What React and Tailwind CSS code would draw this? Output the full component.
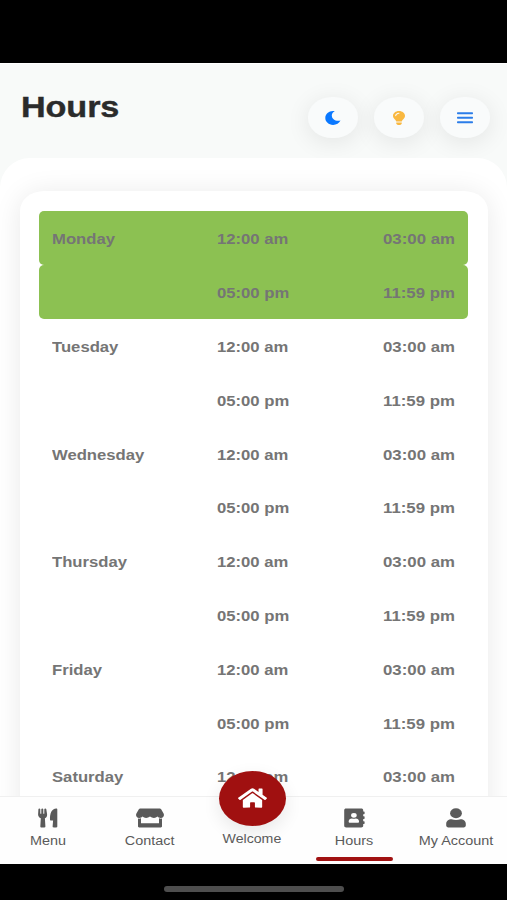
import React from "react";
import { FaLightbulb, FaHome } from "react-icons/fa";

const days = ["Monday", "Tuesday", "Wednesday", "Thursday", "Friday", "Saturday"];

function MoonIcon() {
  return (
    <svg viewBox="0 0 16 14" className="h-[14px] w-[16px] fill-[#0a78ff]">
      <path d="M9.8.2C7.9 1 6.8 2.600 6.800 4.500c0 3.100 2.900 5.300 6.200 5.300.9 0 1.700-.1 2.500-.3-1.300 2.700-4.100 4.400-7.400 4.400C3.700 13.900.3 10.900.3 7.100.3 3.200 3.800.1 8 .1c.6 0 1.200 0 1.800.1Z" />
    </svg>
  );
}

function BarsIcon() {
  return (
    <svg viewBox="0 0 16 12" className="h-[12px] w-[16px] fill-[#2b7de9]">
      <rect y="0.3" width="16" height="2" rx="0.7" />
      <rect y="4.800" width="16" height="2" rx="0.7" />
      <rect y="9.300" width="16" height="2" rx="0.7" />
    </svg>
  );
}

function UtensilsIcon() {
  return (
    <svg viewBox="0 0 20 20" className="h-[20px] w-[20px] fill-current">
      <path d="M.4 1.200C.5.300 2.200.300 2.300 1.200V5.800h1V1.200C3.400.300 5.200.300 5.300 1.200V5.800h1V1.200C6.400.300 8.200.300 8.300 1.200L9.100 6.200c.2 2.200-.8 3.500-2.200 4.100l.5 8.300c0 .5-.4.9-.9.9H3.200c-.5 0-.9-.4-.9-.9l.5-8.300C1.200 9.700.1 8.300.1 6.500Z" />
      <path d="M18.300.5c.6 0 1 .4 1 .9v17.200c0 .5-.4.9-1 .9h-2.700c-.6 0-1-.4-1-.9l.5-6.100h-2.400c-.4 0-.7-.3-.7-.7C11.600 5.500 13.700.7 18.300.5Z" />
    </svg>
  );
}

function StoreIcon() {
  return (
    <svg viewBox="0 0 28 20" className="h-[20px] w-[28px] fill-current">
      <path d="M4.200.4h19.600c.5 0 .9.2 1.200.6l2.600 4.500c1 1.900-.2 4.100-2.700 4.400-1.500.1-2.700-.4-3.500-1.400-1.600 1.900-5.100 1.900-7.400 0-2.300 1.900-5.800 1.900-7.400 0-.8 1-2 1.500-3.500 1.400C.6 9.600-.6 7.400.4 5.500L3 1c.3-.4.7-.6 1.200-.6Z" />
      <path d="M2 10.600c1 .2 2 .1 3-.3v4.900h18v-4.900c1 .4 2 .5 3 .3v7.700c0 .7-.5 1.200-1.200 1.200H3.200c-.7 0-1.200-.5-1.200-1.200Z" />
    </svg>
  );
}

function AddressBookIcon() {
  return (
    <svg viewBox="0 0 21 20" className="h-[20px] w-[21px] fill-current">
      <path
        fillRule="evenodd"
        d="M2.200.5h15c1.200 0 2 .7 2 1.700V3.500h.8c.3 0 .6.2.6.500v1.700c0 .3-.3.5-.6.500h-.8V8.300h.8c.3 0 .6.200.6.500v1.800c0 .3-.3.500-.6.500h-.8v2.200h.8c.3 0 .6.200.6.500v1.700c0 .3-.3.500-.6.500h-.8v1.700c0 1-.8 1.700-2 1.700h-15c-1.200 0-2-.7-2-1.700V2.200C.2 1.200 1 .5 2.200.5ZM9.900 4.900a2.800 2.400 0 1 0 0 4.900 2.800 2.400 0 1 0 0-4.900ZM8 10.500c-2 0-3.300 1.200-3.300 2.800v.7c0 .5.4.800.9.800h8.500c.6 0 .9-.3.9-.8v-.7c0-1.600-1.400-2.800-3.300-2.800-1 .4-2.700.4-3.700 0Z"
      />
    </svg>
  );
}

function UserIcon() {
  return (
    <svg viewBox="0 0 20 20" className="h-[20px] w-[20px] fill-current">
      <ellipse cx="10" cy="5.300" rx="5.900" ry="5" />
      <path d="M5.500 11.200c2.700 1 6.300 1 9 0 3.100 0 5.300 2 5.300 4.500v1.900c0 1.100-.9 1.900-2.100 1.900H2.300C1.100 19.500.2 18.700.2 17.600v-1.900c0-2.500 2.200-4.500 5.300-4.500Z" />
    </svg>
  );
}

function HoursRow({ day, from, to, active }) {
  return (
    <div
      className={`flex h-[53.8px] shrink-0 items-center rounded-[5px] px-[13px] pt-[3px] text-[14px] font-bold leading-none text-[#757575] ${
        active ? "bg-[#8cc152]" : ""
      }`}
    >
      <div className="w-[165px]">
        <span className="inline-block origin-left scale-x-[1.19] whitespace-nowrap">{day}</span>
      </div>
      <div className="w-[72px]">
        <span className="inline-block origin-left scale-x-[1.19] whitespace-nowrap">{from}</span>
      </div>
      <div className="flex-1 text-right">
        <span className="inline-block origin-right scale-x-[1.2] whitespace-nowrap">{to}</span>
      </div>
    </div>
  );
}

function RoundButton({ children }) {
  return (
    <button className="flex h-[41px] w-[50px] items-center justify-center rounded-[24px/20px] bg-[#f9fbfb] shadow-[0_4px_24px_rgba(0,0,0,0.09)]">
      {children}
    </button>
  );
}

function NavItem({ label, children, active }) {
  return (
    <a className="relative flex h-full w-[102px] shrink-0 flex-col items-center pt-[11px] text-[#5a5a5a]">
      <span className="flex h-[20px] items-center">{children}</span>
      <span className="mt-[6px] inline-block scale-x-[1.2] whitespace-nowrap text-[12px] leading-[14px]">
        {label}
      </span>
      {active && (
        <span className="absolute bottom-[3px] h-[4px] w-[77px] rounded-full bg-[#a11212]" />
      )}
    </a>
  );
}

export default function App() {
  return (
    <div className="flex h-[900px] w-[507px] flex-col overflow-hidden bg-black font-['Liberation_Sans',Arial,sans-serif]">
      <div className="h-[63px] shrink-0" />
      <main className="flex h-[733px] shrink-0 flex-col overflow-hidden bg-[#f8faf9]">
        <header className="flex h-[95px] shrink-0 items-start justify-between border-t border-white pl-[21px] pr-[17px]">
          <h1 className="mt-[26px] origin-left scale-x-[1.14] text-[30px] font-bold leading-[34px] tracking-[-0.1px] text-[#2b2b2b] [-webkit-text-stroke:0.4px_#2b2b2b]">
            Hours
          </h1>
          <div className="mt-[33px] flex gap-[16px]">
            <RoundButton>
              <MoonIcon />
            </RoundButton>
            <RoundButton>
              <FaLightbulb viewBox="0 0 352 512" preserveAspectRatio="none" className="h-[14px] w-[12px] text-[#f9b840]" />
            </RoundButton>
            <RoundButton>
              <BarsIcon />
            </RoundButton>
          </div>
        </header>
        <section className="flex-1 rounded-t-[30px] bg-white px-[20px] pt-[33px]">
          <div className="flex h-[800px] w-[468px] flex-col rounded-[24px/20px] bg-white pl-[19.4px] pr-[20px] pt-[20px] shadow-[0_2px_28px_rgba(0,0,0,0.09)]">
            {days.map((day, i) => (
              <React.Fragment key={day}>
                <HoursRow day={day} from="12:00 am" to="03:00 am" active={i === 0} />
                <HoursRow day="" from="05:00 pm" to="11:59 pm" active={i === 0} />
              </React.Fragment>
            ))}
          </div>
        </section>
      </main>
      <nav className="relative flex h-[68px] shrink-0 border-t border-[#f0f0f0] bg-[#fefefe]">
        <div className="-ml-[3px] flex">
          <NavItem label="Menu">
            <UtensilsIcon />
          </NavItem>
          <NavItem label="Contact">
            <StoreIcon />
          </NavItem>
          <a className="relative flex h-full w-[102px] shrink-0 flex-col items-center pt-[35px] text-[#5a5a5a]">
            <span className="absolute -top-[26px] flex h-[55px] w-[67px] items-center justify-center rounded-[50%] bg-[#a01010] text-white shadow-[0_6px_18px_rgba(0,0,0,0.09)]">
              <FaHome preserveAspectRatio="none" className="h-[22px] w-[29px] -translate-y-px" />
            </span>
            <span className="inline-block scale-x-[1.18] whitespace-nowrap text-[12px] leading-[14px]">
              Welcome
            </span>
          </a>
          <NavItem label="Hours" active>
            <AddressBookIcon />
          </NavItem>
          <NavItem label="My Account">
            <UserIcon />
          </NavItem>
        </div>
      </nav>
      <div className="flex h-[36px] shrink-0 justify-center pt-[22px]">
        <div className="h-[6px] w-[180px] rounded-full bg-[#4e4e4e]" />
      </div>
    </div>
  );
}
